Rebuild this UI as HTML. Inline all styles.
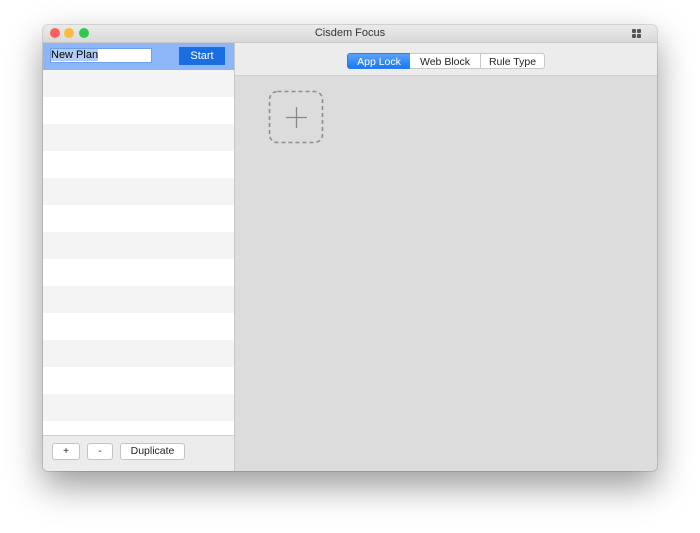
<!DOCTYPE html><html><head><style>
body{margin:0;width:700px;height:533px;background:#fff;font-family:"Liberation Sans",sans-serif;position:relative;overflow:hidden}
.win{position:absolute;left:43px;top:25px;width:614px;height:446px;background:#dcdcdc;border-radius:5px;overflow:hidden;box-shadow:0 15px 35px rgba(0,0,0,.4),0 0 0 1px rgba(0,0,0,.12)}
.title{position:absolute;left:0;top:0;width:614px;height:17px;background:linear-gradient(#ebebeb,#d9d9d9);border-bottom:1px solid #c8c8c8;text-align:center;font-size:11px;line-height:17px;color:#333}
.dot{position:absolute;top:3px;width:10px;height:10px;border-radius:50%}
.left{position:absolute;left:0;top:18px;width:191px;height:428px;border-right:1px solid #c8c8c8;background:#fff}
.row{position:absolute;left:0;width:191px;height:27px}
.abs{position:absolute}
.btn{position:absolute;background:#fff;border:1px solid #c4c4c4;border-radius:3px;font-size:10px;text-align:center;line-height:15px;color:#222}
.seg{position:absolute;top:28px;height:16px;font-size:10.5px;line-height:16px;text-align:center;color:#222;background:#fff;border:1px solid #c8c8c8;box-sizing:border-box}
</style></head><body>
<div class="win">
<div class="title">Cisdem Focus
<div class="dot" style="left:7px;background:#fc605c"></div>
<div class="dot" style="left:21px;background:#fdbc40"></div>
<div class="dot" style="left:36px;background:#34c84a"></div>
<div class="abs" style="left:589px;top:4px;width:10px;height:10px">
<div class="abs" style="left:0;top:0;width:4px;height:4px;background:#555;border-radius:1px"></div>
<div class="abs" style="left:5px;top:0;width:4px;height:4px;background:#555;border-radius:1px"></div>
<div class="abs" style="left:0;top:5px;width:4px;height:4px;background:#555;border-radius:1px"></div>
<div class="abs" style="left:5px;top:5px;width:4px;height:4px;background:#555;border-radius:1px"></div>
</div>
</div>
<div class="left">
<div class="row" style="top:0;background:#8cb6f7"></div>
<div class="abs" style="left:7px;top:5px;width:100px;height:13px;background:#fff;border:1px solid #6fa0ee;font-size:11px;line-height:13px"><span style="background:#b3cdf5">New Plan</span></div>
<div class="abs" style="left:136px;top:4px;width:46px;height:18px;background:#1b6ee0;color:#fff;font-size:11px;line-height:18px;text-align:center">Start</div>
<div class="row" style="top:27px;background:#f4f4f4"></div>
<div class="row" style="top:81px;background:#f4f4f4"></div>
<div class="row" style="top:135px;background:#f4f4f4"></div>
<div class="row" style="top:189px;background:#f4f4f4"></div>
<div class="row" style="top:243px;background:#f4f4f4"></div>
<div class="row" style="top:297px;background:#f4f4f4"></div>
<div class="row" style="top:351px;background:#f4f4f4"></div>
<div class="abs" style="left:0;top:392px;width:191px;height:36px;background:#ececec;border-top:1px solid #d0d0d0"></div>
<div class="btn" style="left:9px;top:400px;width:26px">+</div>
<div class="btn" style="left:44px;top:400px;width:24px">-</div>
<div class="btn" style="left:77px;top:400px;width:63px;font-size:10.5px">Duplicate</div>
</div>
<div class="abs" style="left:192px;top:18px;width:422px;height:32px;background:#ececec;border-bottom:1px solid #cfcfcf"></div>
<div class="seg" style="left:304px;width:64px;background:linear-gradient(#5aa2fb,#1a78f2);color:#fff;border-color:#2b7de9;border-radius:3px 0 0 3px">App Lock</div>
<div class="seg" style="left:367px;width:71px;border-left:none">Web Block</div>
<div class="seg" style="left:437px;width:65px;border-radius:0 3px 3px 0">Rule Type</div>
<svg class="abs" style="left:225px;top:65px" width="56" height="54"><rect x="1.5" y="1.5" width="53" height="51" rx="8" fill="none" stroke="#8e8e8e" stroke-width="1.6" stroke-dasharray="4,3"/><path d="M18 27.5H39M28.5 17V38" stroke="#888" stroke-width="1.3"/></svg>
</div>
</body></html>
